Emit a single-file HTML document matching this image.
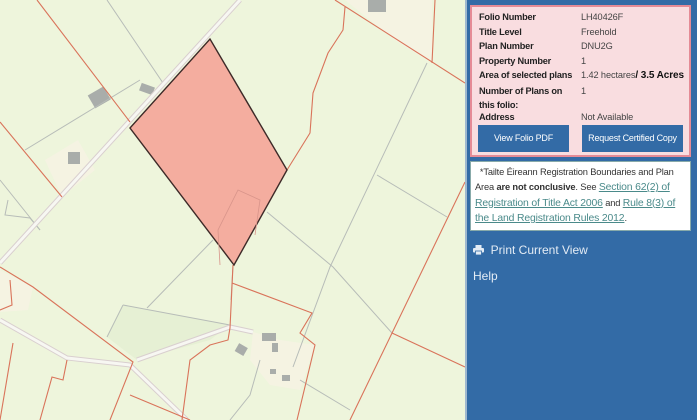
<!DOCTYPE html>
<html><head><meta charset="utf-8"><style>
body{margin:0;width:697px;height:420px;overflow:hidden;position:relative;font-family:"Liberation Sans",sans-serif;background:#eef5dc}
#map{position:absolute;left:0;top:0}
#panel{position:absolute;left:465px;top:0;width:232px;height:420px;background:#336ba6;border-left:2px solid #9fb8cf;box-sizing:border-box}
#info{position:absolute;left:3px;top:5px;width:221px;height:152px;background:#f9dde0;border:2px solid #e58b96;box-sizing:border-box;font-size:9.2px;color:#222;line-height:12px}
.r{position:absolute;left:7px;font-weight:bold;letter-spacing:-0.2px}
.v{position:absolute;left:109px;color:#444;letter-spacing:-0.1px}
.btn{position:absolute;top:118px;height:27px;background:#336ba6;color:#fff;font-size:9px;text-align:center;line-height:27px;letter-spacing:-0.2px}
#note{position:absolute;left:3px;top:161px;width:221px;height:70px;background:#fff;border:1px solid #8aa;box-sizing:border-box;font-size:9.3px;color:#333;padding:3px 3px 0 4px;line-height:15.3px;letter-spacing:-0.15px}
#note a{color:#4a8a8a;text-decoration:underline;font-size:10.4px}
.m{position:absolute;left:6px;color:#e4ecf5;font-size:12px}
</style></head><body>
<svg id="map" width="465" height="420" viewBox="0 0 465 420">
<rect width="465" height="420" fill="#eef5dc"/>
<polygon points="345,0 432,0 432,63 395,40" fill="#f5f3e2"/>
<polygon points="45,160 78,140 95,170 62,197" fill="#f5f3e2"/>
<polygon points="0,270 33,287 28,310 0,312" fill="#f5f3e2"/>
<polygon points="253,332 280,340 315,345 300,390 270,385 250,360" fill="#f5f3e2"/>
<polygon points="123,305 230,325 210,340 137,360 107,337" fill="#e6f0d4"/>
<g fill="#a9adaa"><rect x="368" y="0" width="18" height="12"/><rect x="90" y="90" width="18" height="15" transform="rotate(-30 99 97)"/><rect x="68" y="152" width="12" height="12"/><rect x="140" y="85" width="14" height="8" transform="rotate(20 147 89)"/><rect x="262" y="333" width="14" height="8"/><rect x="272" y="343" width="6" height="9"/><rect x="236" y="345" width="10" height="9" transform="rotate(30 241 350)"/><rect x="282" y="375" width="8" height="6"/><rect x="270" y="369" width="6" height="5"/></g>
<g fill="none" stroke="#b7bcb8" stroke-width="1">
<path d="M107,0 L163,83"/><path d="M427,63 L330,267 L293,367"/><path d="M267,212 L333,267 L392,333"/><path d="M147,308 L213,240"/><path d="M123,305 L230,325"/><path d="M123,305 L107,337"/><path d="M377,175 L447,217"/><path d="M25,150 L140,80"/><path d="M0,180 L40,230"/><path d="M8,200 L5,215 L30,218 L40,230"/><path d="M300,380 L350,410"/><path d="M260,360 L250,395 L230,420"/><path d="M233,265 L231,300"/>
</g>
<g fill="none" stroke="#d9cfcf" stroke-width="5"><path d="M240,0 L0,263"/><path d="M0,320 L67,358 L130,365 L187,420"/><path d="M137,360 L230,327 L253,332"/></g>
<g fill="none" stroke="#f7f7f2" stroke-width="3"><path d="M240,0 L0,263"/><path d="M0,320 L67,358 L130,365 L187,420"/><path d="M137,360 L230,327 L253,332"/></g>
<g fill="none" stroke="#d9735a" stroke-width="1.1">
<path d="M37,0 L130,122"/><path d="M0,122 L62,197"/><path d="M335,0 L465,83"/><path d="M345,7 L343,30 L328,53 L313,93 L310,133 L287,170"/><path d="M435,0 L432,63"/><path d="M465,182 L350,420"/><path d="M232,283 L312,313 L300,333 L315,345 L297,420"/><path d="M230,328 L233,265"/><path d="M392,333 L465,367"/><path d="M0,267 L33,287 L133,362 L110,420"/><path d="M13,343 L0,420"/><path d="M67,360 L63,380 L52,377 L40,420"/><path d="M230,328 L228,340 L210,345 L190,360 L182,420"/><path d="M10,280 L12,305 L0,310"/><path d="M130,395 L190,420"/>
</g>
<polygon points="130,128 210,39 287,170 234,265" fill="#f4ad9f" stroke="#3d2a28" stroke-width="1.4"/>
<path d="M220,265 L218,230 L238,190 L260,200 L255,235" fill="none" stroke="#d8948a" stroke-width="0.8"/>
</svg>
<div id="panel">
<div id="info">
<div class="r" style="top:4px">Folio Number</div><div class="v" style="top:4px">LH40426F</div>
<div class="r" style="top:19px">Title Level</div><div class="v" style="top:19px">Freehold</div>
<div class="r" style="top:33px">Plan Number</div><div class="v" style="top:33px">DNU2G</div>
<div class="r" style="top:48px">Property Number</div><div class="v" style="top:48px">1</div>
<div class="r" style="top:62px">Area of selected plans</div><div class="v" style="top:62px;white-space:nowrap">1.42 hectares<b style="color:#111;font-size:10px">/ 3.5 Acres</b></div>
<div class="r" style="top:77px;line-height:14px">Number of Plans on<br>this folio:</div><div class="v" style="top:78px">1</div>
<div class="r" style="top:104px">Address</div><div class="v" style="top:104px">Not Available</div>
<div class="btn" style="left:6px;width:91px">View Folio PDF</div>
<div class="btn" style="left:110px;width:101px">Request Certified Copy</div>
</div>
<div id="note">&nbsp;&nbsp;*Tailte Éireann Registration Boundaries and Plan Area <b>are not conclusive</b>. See <a>Section 62(2) of Registration of Title Act 2006</a> and <a>Rule 8(3) of the Land Registration Rules 2012</a>.</div>
<div class="m" style="top:243px"><svg width="11" height="10" viewBox="0 0 11 10" style="vertical-align:-1px"><rect x="2.5" y="0" width="6" height="3" fill="#e4ecf5"/><rect x="0" y="3" width="11" height="4.5" rx="1" fill="#e4ecf5"/><rect x="2.5" y="6" width="6" height="4" fill="#e4ecf5" stroke="#336ba6" stroke-width="0.8"/></svg>&nbsp;&nbsp;Print Current View</div>
<div class="m" style="top:269px">Help</div>
</div>
</body></html>
